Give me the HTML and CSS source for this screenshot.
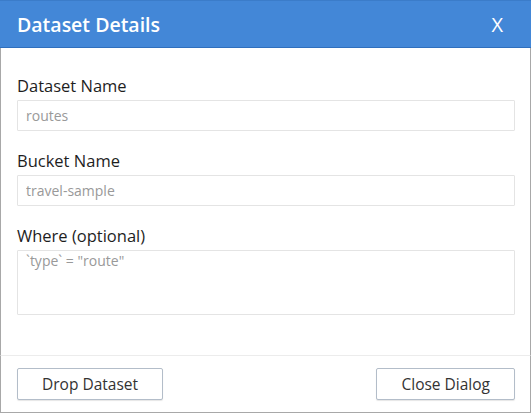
FILE: index.html
```html
<!DOCTYPE html>
<html>
<head>
<meta charset="utf-8">
<link rel="stylesheet" href="styles.css">
</head>
<body>
<div class="dialog">
  <div class="header">
    <span class="title">Dataset Details</span>
    <span class="close">X</span>
  </div>
  <div class="content">
    <div class="field">
      <label class="label">Dataset Name</label>
      <input class="input" type="text" placeholder="routes">
    </div>
    <div class="field">
      <label class="label">Bucket Name</label>
      <input class="input" type="text" placeholder="travel-sample">
    </div>
    <div class="field">
      <label class="label">Where (optional)</label>
      <textarea class="textarea" placeholder="`type` = &quot;route&quot;"></textarea>
    </div>
  </div>
  <div class="footer">
    <button class="btn">Drop Dataset</button>
    <button class="btn">Close Dialog</button>
  </div>
</div>
</body>
</html>
```
FILE: styles.css
```css
* { box-sizing: border-box; }
html, body { margin: 0; padding: 0; background: #fff; }
body { font-family: "Open Sans", sans-serif; }
.dialog {
  width: 531px;
  height: 413px;
  display: flex;
  flex-direction: column;
}
.header {
  height: 48px;
  background: #4387d7;
  border-top: 1px solid #3b7cc9;
  border-bottom: 1px solid #2f6fbd;
  display: flex;
  justify-content: space-between;
  align-items: center;
  padding: 1px 28px 0 17px;
  color: #fff;
}
.title { font-size: 19.5px; font-weight: 600; }
.close { font-size: 20px; font-weight: 400; }
.content {
  flex: 1;
  border-left: 1px solid #a8a8a8;
  border-right: 1px solid #a8a8a8;
  padding: 28px 15px 0 16px;
  display: flex;
  flex-direction: column;
  gap: 20px;
}
.field { display: flex; flex-direction: column; }
.label {
  font-size: 16.5px;
  line-height: 20px;
  color: #1e1e1e;
  margin-bottom: 4px;
}
.input, .textarea {
  width: 100%;
  border: 1px solid #e4e4e4;
  border-radius: 1px;
  background: #fff;
  font-family: "Open Sans", sans-serif;
  font-size: 14px;
  color: #333;
  padding: 0 8px;
  outline: none;
}
.input { height: 31px; }
.textarea { height: 65px; resize: none; padding: 0 8px; line-height: 20px; }
.input::placeholder, .textarea::placeholder { color: #999; opacity: 1; }
.footer {
  height: 58px;
  border: 1px solid #a8a8a8;
  border-top: 1px solid #ececec;
  display: flex;
  justify-content: space-between;
  align-items: flex-start;
  padding: 12px 15px 0 16px;
}
.btn {
  height: 32px;
  background: #fff;
  border: 1px solid #b3bdc9;
  border-radius: 2px;
  box-shadow: 0 1px 1px rgba(0,0,0,0.1);
  font-family: "Open Sans", sans-serif;
  font-size: 15.5px;
  color: #333;
  padding: 0 24px;
}
```
